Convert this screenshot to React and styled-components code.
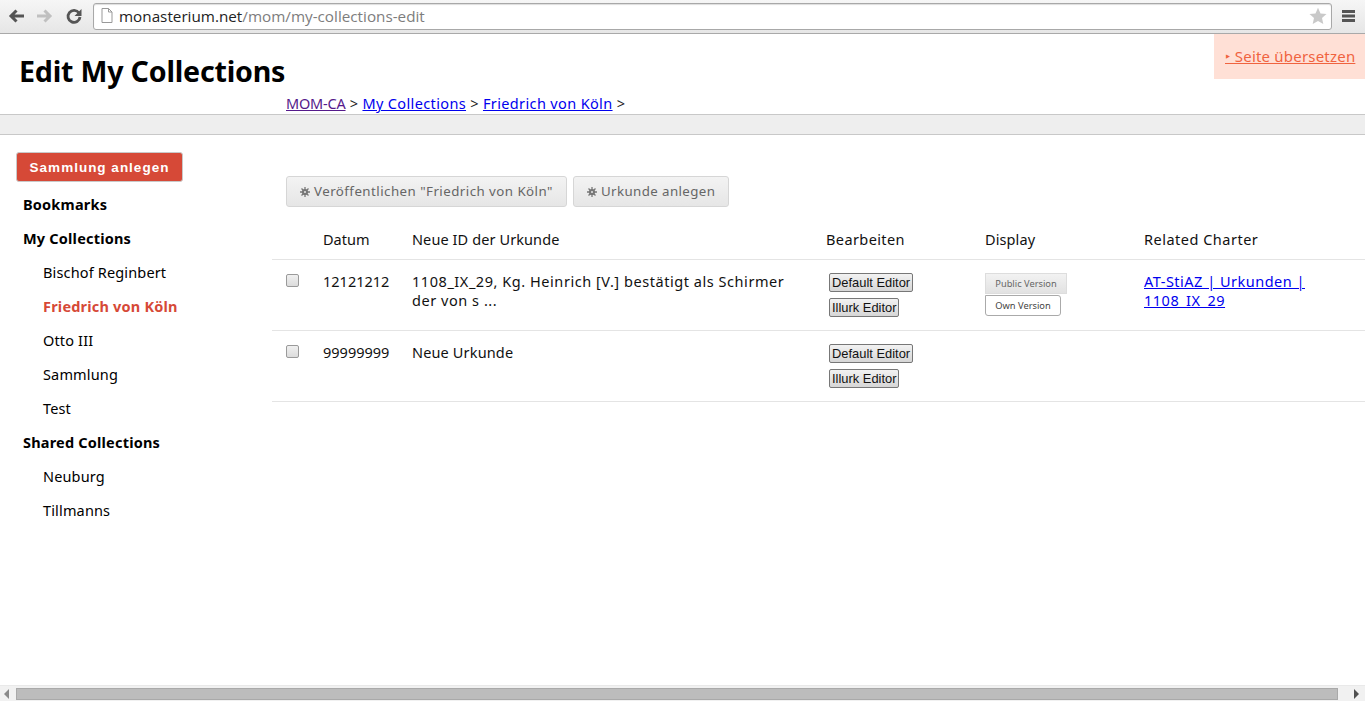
import React from "react";
import styled, { createGlobalStyle } from "styled-components";

const Global = createGlobalStyle`
  html, body { margin: 0; padding: 0; height: 100%; overflow: hidden; background: #fff; }
  * { box-sizing: border-box; }
`;
const FONT = `"Noto Sans", "Open Sans", sans-serif`;

const Page = styled.div`
  height: 701px; width: 1365px; display: flex; flex-direction: column; position: relative;
  font-family: ${FONT}; font-size: 14.5px; color: #000; overflow: hidden;
`;
const BrowserBar = styled.div`
  height: 34px; flex: none; display: flex; align-items: center; padding: 0 0 1px 6px;
  background: linear-gradient(#f6f6f6, #e6e6e6); border-bottom: 1px solid #a9a9a9;
`;
const NavIcon = styled.svg`
  width: 20px; height: 20px; flex: none; margin-right: 9px; display: block;
`;
const UrlBox = styled.div`
  width: 1239px; height: 27px; display: flex; align-items: center; padding: 0 4px 1px 7px;
  background: #fff; border: 1px solid #a8a8a8; border-radius: 3px; box-shadow: inset 0 1px 1px #ddd;
  font-family: "Open Sans", sans-serif; font-size: 15.25px;
`;
const Host = styled.span` color: #222; margin-left: 6px; `;
const UrlPath = styled.span` color: #7d7d7d; flex: 1; `;
const MenuIcon = styled.svg` width: 13px; height: 12px; flex: none; margin-left: 10px; display: block; `;
const Header = styled.header`
  height: 80px; flex: none; padding: 0 0 0 19px; display: flex; flex-direction: column;
`;
const Title = styled.h1`
  margin: 17px 0 0; font-size: 28.6px; line-height: 40px; font-weight: 700; font-family: ${FONT}; letter-spacing: -0.2px;
`;
const Crumbs = styled.nav`
  margin: 2px 0 0 267px; line-height: 20px; font-size: 14.5px; color: #222; letter-spacing: 0.36px;
`;
const Crumb = styled.a`
  color: ${(p) => (p.$visited ? "#551a8b" : "#0000ee")}; text-decoration: underline;
  letter-spacing: ${(p) => (p.$visited ? "-0.2px" : "0.36px")};
`;
const Band = styled.div`
  height: 21px; flex: none; background: #eee; border-top: 1px solid #c8c8c8; border-bottom: 1px solid #c8c8c8;
`;
const Translate = styled.a`
  position: absolute; left: 1214px; top: 34px; width: 151px; height: 45px; background: #ffe0d6;
  color: #f0633f; font-size: 15px; letter-spacing: 0.2px; padding: 12px 0 0 11px; line-height: 20px; text-decoration: underline;
`;
const Main = styled.main` flex: 1; display: flex; min-height: 0; `;
const Sidebar = styled.aside` width: 272px; flex: none; padding: 17px 0 0 16px; `;
const CreateBtn = styled.button`
  width: 167px; height: 30px; background: #d64937; border: 1px solid #c9c9c9; border-radius: 3px; color: #fff;
  font-family: "Liberation Sans", Arial, sans-serif; font-weight: 700; font-size: 13.5px; letter-spacing: 1px;
  padding: 0; display: block; margin-bottom: 5px;
`;
const NavItem = styled.div`
  height: 34px; line-height: 34px; font-size: 14.5px;
  font-weight: ${(p) => (p.$bold ? 700 : 400)};
  letter-spacing: ${(p) => (p.$bold ? 0.2 : 0.15)}px;
  padding-left: ${(p) => (p.$child ? 27 : 7)}px;
  color: ${(p) => (p.$active ? "#d64937" : "#000")};
`;
const Content = styled.section` flex: 1; padding-top: 41px; min-width: 0; `;
const Actions = styled.div` display: flex; gap: 6px; padding-left: 14px; height: 32px; `;
const ActionBtn = styled.button`
  height: 31px; padding: 0 13px 2px 13px; display: flex; align-items: center; gap: 4px;
  background: linear-gradient(#f3f3f3, #e6e6e6); border: 1px solid #d6d6d6; border-radius: 3px;
  color: #666; font-family: ${FONT}; font-size: 13.3px; letter-spacing: ${(p) => p.$ls}px; white-space: nowrap;
`;
const GearIcon = styled.svg` width: 10px; height: 10px; flex: none; display: block; margin-top: 2px; `;
const Row = styled.div`
  display: grid; grid-template-columns: 51px 89px 414px 159px 159px 1fr;
  height: ${(p) => p.$h}px; border-bottom: 1px solid #e4e4e4; line-height: 19px;
`;
const HeadCell = styled.div`
  padding-top: 22px; font-size: 14.5px; color: #111; letter-spacing: ${(p) => p.$ls || 0}px;
`;
const Cell = styled.div`
  padding: 12px 20px 0 0; font-size: 14.5px; color: #111; letter-spacing: ${(p) => p.$ls || 0}px;
`;
const BoxCell = styled.div` padding: 14px 0 0 14px; `;
const Check = styled.span`
  display: block; width: 13px; height: 13px; border: 1px solid #9a9a9a; border-radius: 2px;
  background: linear-gradient(#f0f0f0, #dcdcdc);
`;
const EditCell = styled.div` padding: 13px 0 0 3px; display: flex; flex-direction: column; align-items: flex-start; gap: 6px; `;
const EditorBtn = styled.button`
  height: 19px; padding: 0 2px; border: 1px solid #777; border-radius: 2px; background: linear-gradient(#f2f2f2, #d6d6d6);
  color: #111; font-family: "Liberation Sans", Arial, sans-serif; font-size: 12.9px; line-height: 17px; white-space: nowrap;
`;
const DisplayCell = styled.div` padding-top: 13px; display: flex; flex-direction: column; align-items: flex-start; gap: 1px; `;
const PublicBtn = styled.button`
  width: 82px; height: 21px; padding: 0; border: 1px solid #ddd; background: linear-gradient(#f2f2f2, #e2e2e2);
  color: #666; font-family: ${FONT}; font-size: 9.3px;
`;
const OwnBtn = styled.button`
  width: 76px; height: 21px; padding: 0; border: 1px solid #aaa; border-radius: 0 3px 3px 3px; background: #fff;
  color: #444; font-family: ${FONT}; font-size: 9.3px;
`;
const CharterLink = styled.a` color: #0000ee; text-decoration: underline; display: block; width: 180px; letter-spacing: 0.5px; `;
const ScrollBar = styled.div`
  height: 16px; flex: none; background: #f1f1f1; border-top: 1px solid #e9e9e9; display: flex; align-items: center;
`;
const Thumb = styled.div`
  width: 1322px; height: 12px; background: #bcbcbc; border: 1px solid #a9a9a9;
`;
const Arrow = styled.svg` width: 16px; height: 10px; display: block; flex: none; margin-left: ${(p) => (p.$end ? "auto" : "0")}; `;

const rows = [
  {
    date: "12121212",
    title: "1108_IX_29, Kg. Heinrich [V.] bestätigt als Schirmer der von s ...",
    ls: 0.55,
    link: true,
  },
  { date: "99999999", title: "Neue Urkunde", ls: 0.15, link: false },
];
const tree = [
  { t: "Bookmarks", bold: true },
  { t: "My Collections", bold: true },
  { t: "Bischof Reginbert", child: true },
  { t: "Friedrich von Köln", child: true, bold: true, active: true },
  { t: "Otto III", child: true },
  { t: "Sammlung", child: true },
  { t: "Test", child: true },
  { t: "Shared Collections", bold: true },
  { t: "Neuburg", child: true },
  { t: "Tillmanns", child: true },
];

function Gear() {
  return (
    <GearIcon viewBox="0 0 10 10">
      <g stroke="#777" strokeWidth="1.3">
        <path d="M5 0v10M0 5h10M1.5 1.5l7 7M8.5 1.5l-7 7" />
      </g>
      <circle cx="5" cy="5" r="3.1" fill="#777" />
      <circle cx="5" cy="5" r="1" fill="#e6e6e6" />
    </GearIcon>
  );
}

export default function App() {
  return (
    <Page>
      <Global />
      <BrowserBar>
        <NavIcon viewBox="0 0 20 20">
          <path d="M18 10H6M10.5 4.5 5 10l5.5 5.5" fill="none" stroke="#555" strokeWidth="3" />
        </NavIcon>
        <NavIcon viewBox="0 0 20 20">
          <path d="M2 10h12M9.5 4.5 15 10l-5.5 5.5" fill="none" stroke="#c0c0c0" strokeWidth="3" />
        </NavIcon>
        <NavIcon viewBox="0 0 20 20">
          <path d="M15 7a6 6 0 1 0 1 4" fill="none" stroke="#555" strokeWidth="2.8" />
          <path d="M17.5 3v7h-7z" fill="#555" />
        </NavIcon>
        <UrlBox>
          <svg width="12" height="15" viewBox="0 0 12 15">
            <path d="M1 .5h6.5L11 4v10.5H1z" fill="#fff" stroke="#999" />
            <path d="M7.5.5V4H11" fill="none" stroke="#999" />
          </svg>
          <Host>monasterium.net</Host>
          <UrlPath>/mom/my-collections-edit</UrlPath>
          <svg width="18" height="18" viewBox="0 0 18 18">
            <path d="M9 .8l2.5 5.6 6 .6-4.5 4 1.3 6L9 14l-5.3 3 1.3-6-4.5-4 6-.6z" fill="#c9c9c9" />
          </svg>
        </UrlBox>
        <MenuIcon viewBox="0 0 13 12">
          <path d="M0 0h13v3H0zM0 4.5h13v3H0zM0 9h13v3H0z" fill="#555" />
        </MenuIcon>
      </BrowserBar>
      <Header>
        <Title>Edit My Collections</Title>
        <Crumbs>
          <Crumb $visited href="#">MOM-CA</Crumb> &gt; <Crumb href="#">My Collections</Crumb> &gt;{" "}
          <Crumb href="#">Friedrich von Köln</Crumb> &gt;
        </Crumbs>
      </Header>
      <Translate href="#">‣ Seite übersetzen</Translate>
      <Band />
      <Main>
        <Sidebar>
          <CreateBtn>Sammlung anlegen</CreateBtn>
          {tree.map((n) => (
            <NavItem key={n.t} $bold={n.bold} $child={n.child} $active={n.active}>{n.t}</NavItem>
          ))}
        </Sidebar>
        <Content>
          <Actions>
            <ActionBtn $ls={0.46}><Gear />Veröffentlichen "Friedrich von Köln"</ActionBtn>
            <ActionBtn $ls={0.4}><Gear />Urkunde anlegen</ActionBtn>
          </Actions>
          <Row $h={52}>
            <HeadCell />
            <HeadCell>Datum</HeadCell>
            <HeadCell $ls={0.1}>Neue ID der Urkunde</HeadCell>
            <HeadCell $ls={0.4}>Bearbeiten</HeadCell>
            <HeadCell $ls={0.1}>Display</HeadCell>
            <HeadCell $ls={0.5}>Related Charter</HeadCell>
          </Row>
          {rows.map((r) => (
            <Row key={r.date} $h={71}>
              <BoxCell><Check /></BoxCell>
              <Cell>{r.date}</Cell>
              <Cell $ls={r.ls}>{r.title}</Cell>
              <EditCell>
                <EditorBtn>Default Editor</EditorBtn>
                <EditorBtn>Illurk Editor</EditorBtn>
              </EditCell>
              {r.link ? (
                <DisplayCell>
                  <PublicBtn>Public Version</PublicBtn>
                  <OwnBtn>Own Version</OwnBtn>
                </DisplayCell>
              ) : <Cell />}
              <Cell>{r.link && <CharterLink href="#">AT-StiAZ | Urkunden | 1108_IX_29</CharterLink>}</Cell>
            </Row>
          ))}
        </Content>
      </Main>
      <ScrollBar>
        <Arrow viewBox="0 0 16 10"><path d="M9 0v10L4 5z" fill="#8a8a8a" /></Arrow>
        <Thumb />
        <Arrow $end viewBox="0 0 16 10"><path d="M5 0v10l5-5z" fill="#505050" /></Arrow>
      </ScrollBar>
    </Page>
  );
}
